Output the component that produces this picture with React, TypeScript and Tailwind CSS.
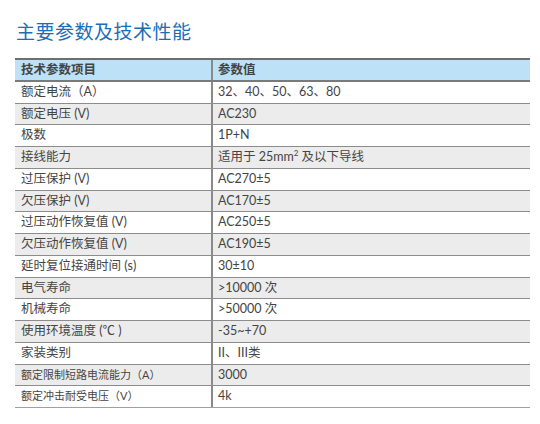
const rows: [string, React.ReactNode, boolean?][] = [
  ['额定电流（A）', '32、40、50、63、80'],
  ['额定电压 (V)', 'AC230'],
  ['极数', '1P+N'],
  ['接线能力', (<>适用于 25mm<sup className="text-[8px]">2</sup>&nbsp;及以下导线</>)],
  ['过压保护 (V)', 'AC270±5'],
  ['欠压保护 (V)', 'AC170±5'],
  ['过压动作恢复值 (V)', 'AC250±5'],
  ['欠压动作恢复值 (V)', 'AC190±5'],
  ['延时复位接通时间 (s)', '30±10'],
  ['电气寿命', '>10000 次'],
  ['机械寿命', '>50000 次'],
  ['使用环境温度 (℃ )', '-35~+70'],
  ['家装类别', 'II、III类'],
  ['额定限制短路电流能力（A）', '3000', true],
  ['额定冲击耐受电压（V）', '4k', true],
];

export default function App() {
  return (
    <div className="w-[540px] h-[424px] bg-white font-['Lato','Noto_Sans_CJK_SC',sans-serif] text-[#444]">
      <h1 className="pl-4 pt-[19px] text-[19px] leading-[26px] tracking-[0.5px] text-[#1c6db4]">
        主要参数及技术性能
      </h1>

      {/* table */}
      <div className="mt-[13px] ml-[15px] w-[515px] border-t-2 border-[#6e6e6e] text-[12.5px]">
        <div className="flex h-[21.75px] bg-[#bde2f7] font-bold border-b-2 border-[#7a7a7a]">
          <div className="w-[198px] pl-[6px] flex items-center border-r-2 border-[#8a8a8a]">技术参数项目</div>
          <div className="flex-1 pl-[5px] flex items-center">参数值</div>
        </div>
        {rows.map(([name, value, small], i) => (
          <div
            key={i}
            className={`flex h-[21.75px] border-b-[1.5px] ${i === rows.length - 1 ? 'border-[#a0a0a0] border-b-2' : 'border-[#8c8c8c]'} ${i % 2 === 1 ? 'bg-[#ececec]' : 'bg-white'}`}
          >
            <div className={`w-[198px] pl-[6px] flex items-center border-r-2 border-[#8a8a8a] ${small ? 'text-[11px]' : ''}`}>{name}</div>
            <div className="flex-1 pl-[5px] flex items-center">{value}</div>
          </div>
        ))}
      </div>
    </div>
  );
}
